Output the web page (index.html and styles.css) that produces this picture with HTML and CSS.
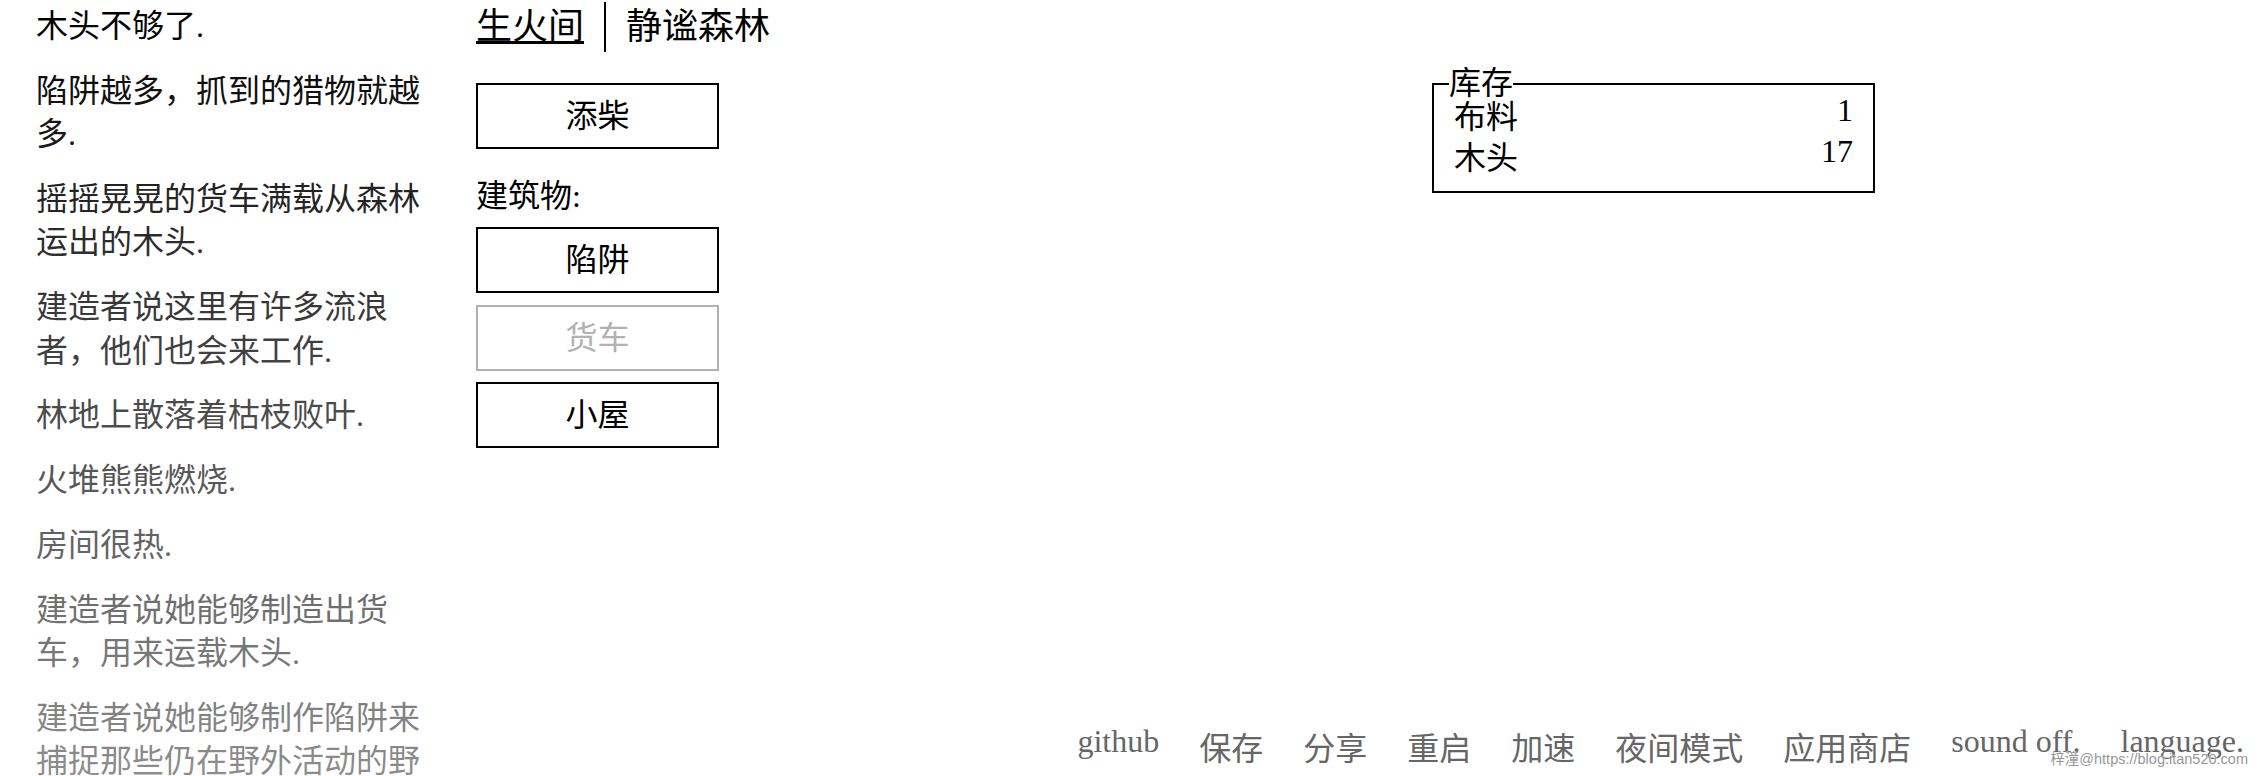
FILE: index.html
```html
<!DOCTYPE html>
<html lang="zh-CN">
<head>
<meta charset="utf-8">
<title>A Dark Room</title>
<link rel="stylesheet" href="styles.css">
</head>
<body>
<div class="page">
  <div class="layout">
    <div class="notifications">
      <div class="notification">木头不够了.</div>
      <div class="notification">陷阱越多，抓到的猎物就越多.</div>
      <div class="notification">摇摇晃晃的货车满载从森林运出的木头.</div>
      <div class="notification">建造者说这里有许多流浪者，他们也会来工作.</div>
      <div class="notification">林地上散落着枯枝败叶.</div>
      <div class="notification">火堆熊熊燃烧.</div>
      <div class="notification">房间很热.</div>
      <div class="notification">建造者说她能够制造出货车，用来运载木头.</div>
      <div class="notification">建造者说她能够制作陷阱来捕捉那些仍在野外活动的野兽.</div>
      <div class="notify-gradient"></div>
    </div>
    <div class="main">
      <div class="header">
        <span class="header-button selected">生火间</span>
        <span class="header-button">静谧森林</span>
      </div>
      <div class="room">
        <div class="button">添柴</div>
        <div class="build-title">建筑物:</div>
        <div class="build-buttons">
          <div class="button">陷阱</div>
          <div class="button disabled">货车</div>
          <div class="button">小屋</div>
        </div>
      </div>
    </div>
    <div class="stores-col">
      <div class="stores">
        <div class="legend">库存</div>
        <div class="store-row"><span class="store-name">布料</span><span class="store-num">1</span></div>
        <div class="store-row"><span class="store-name">木头</span><span class="store-num">17</span></div>
      </div>
    </div>
  </div>
  <div class="menu">
    <span class="menu-item latin">github</span><span class="menu-item">保存</span><span class="menu-item">分享</span><span class="menu-item">重启</span><span class="menu-item">加速</span><span class="menu-item">夜间模式</span><span class="menu-item">应用商店</span><span class="menu-item latin">sound off.</span><span class="menu-item latin">language.</span>
  </div>
  <div class="watermark">梓潼@https://blog.itan520.com</div>
</div>
</body>
</html>
```

FILE: styles.css
```css
* { box-sizing: border-box; }

html, body {
  margin: 0;
  padding: 0;
  background: #fff;
}

body {
  font-family: "Liberation Serif", "Noto Sans CJK SC", serif;
  font-size: 32px;
  color: #000;
}

.page {
  position: relative;
  display: grid;
  grid-template-columns: 100%;
  grid-template-rows: 1fr auto;
  height: 100vh;
  overflow: hidden;
}

.layout {
  grid-row: 1 / 3;
  grid-column: 1;
  display: flex;
  align-items: flex-start;
  min-height: 0;
  overflow: hidden;
}

/* notifications */
.notifications {
  position: relative;
  flex: 0 0 400px;
  width: 400px;
  margin-left: 36px;
  padding-top: 5px;
  height: 1400px;
}

.notification {
  line-height: 43.4px;
  margin-bottom: 21.4px;
}

.notify-gradient {
  position: absolute;
  top: 0;
  left: 0;
  right: 0;
  height: 1400px;
  background: linear-gradient(to bottom, rgba(255,255,255,0) 0%, rgba(255,255,255,1) 100%);
}

/* main panel */
.main {
  flex: 0 0 956px;
  margin-left: 40px;
  padding-top: 2px;
}

.header {
  display: flex;
  height: 50px;
  font-size: 36px;
  line-height: 50px;
}

.header-button {
  padding: 0 20px;
  cursor: pointer;
}

.header-button:first-child {
  padding-left: 0;
}

.header-button + .header-button {
  border-left: 2px solid #000;
}

.header-button.selected {
  text-decoration: underline;
}

.room {
  margin-top: 31px;
}

.button {
  width: 243px;
  height: 66px;
  border: 2px solid #000;
  display: flex;
  align-items: center;
  justify-content: center;
  line-height: 43px;
  padding-top: 1px;
  cursor: pointer;
}

.button.disabled {
  border-color: #b2b2b2;
  color: #b2b2b2;
  cursor: default;
}

.build-title {
  margin-top: 26px;
  margin-bottom: 9px;
  line-height: 43px;
}

.build-buttons {
  display: flex;
  flex-direction: column;
  gap: 11.5px;
}

/* stores */
.stores-col {
  flex: 0 0 443px;
  padding-top: 83px;
}

.stores {
  position: relative;
  width: 443px;
  border: 2px solid #000;
  padding: 12px 20px;
}

.legend {
  position: absolute;
  top: -18px;
  left: 15px;
  line-height: 32px;
  background: #fff;
}

.store-row {
  display: flex;
  justify-content: space-between;
  align-items: flex-start;
  line-height: 41px;
}

.store-num {
  margin-top: -7px;
}

/* menu */
.menu {
  grid-row: 2;
  grid-column: 1;
  justify-self: end;
  padding: 0 14px 5px 0;
  line-height: 43px;
  color: #666;
  white-space: nowrap;
}

.menu-item {
  display: inline-block;
  margin-left: 40px;
  cursor: pointer;
}

.menu-item:first-child {
  margin-left: 0;
}

.menu-item.latin {
  vertical-align: 8px;
}

.watermark {
  position: absolute;
  right: 10px;
  bottom: 8px;
  font-family: "Liberation Sans", "Noto Sans CJK SC", sans-serif;
  font-size: 14.5px;
  line-height: 17px;
  color: rgba(130, 130, 130, 0.85);
  text-shadow: 0 0 1px #fff, 0 0 1px #fff;
  white-space: nowrap;
}
```
